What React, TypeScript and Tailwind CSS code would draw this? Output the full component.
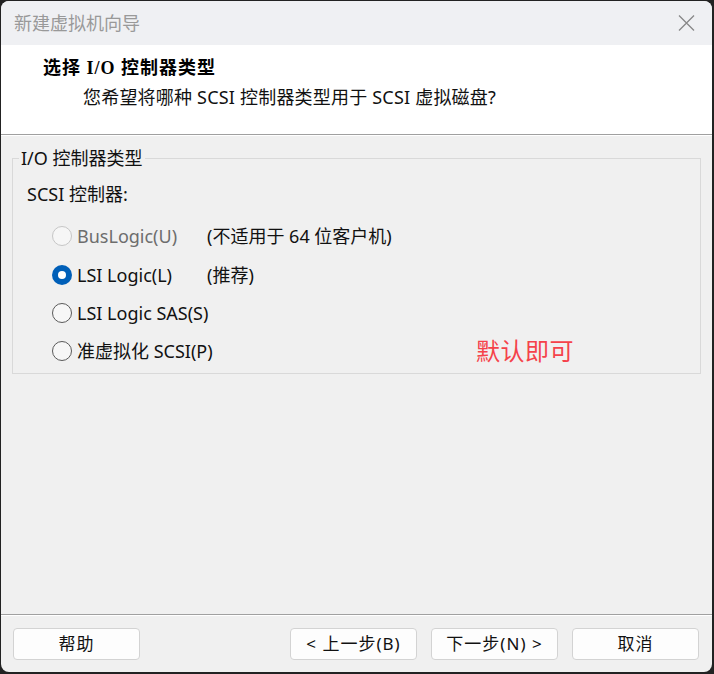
import { useState } from "react";

const ui = "font-['Noto_Sans','Noto_Sans_CJK_SC',sans-serif]";

type Opt = { label: string; note?: string; disabled?: boolean };

const options: Opt[] = [
  { label: "BusLogic(U)", note: "(不适用于 64 位客户机)", disabled: true },
  { label: "LSI Logic(L)", note: "(推荐)" },
  { label: "LSI Logic SAS(S)" },
  { label: "准虚拟化 SCSI(P)" },
];

const Radio = ({ checked, disabled }: { checked: boolean; disabled?: boolean }) => {
  if (checked) {
    return (
      <span className="flex h-[20px] w-[20px] shrink-0 items-center justify-center rounded-full bg-[#005fb8]">
        <span className="h-[8px] w-[8px] rounded-full bg-white" />
      </span>
    );
  }
  return (
    <span
      className={`h-[20px] w-[20px] shrink-0 rounded-full border ${
        disabled ? "border-[#c6c6c6] bg-[#f6f6f6]" : "border-[#5a5a5a] bg-[#f7f7f7]"
      }`}
    />
  );
};

const Button = ({ children }: { children: React.ReactNode }) => (
  <button className="flex h-[32px] w-[127px] items-center justify-center rounded-[4px] border border-[#d3d3d3] bg-[#fdfdfd] text-[17px] tracking-[1px] text-[#111]">
    {children}
  </button>
);

export default function App() {
  const [selected, setSelected] = useState(1);

  return (
    <div className={`h-[674px] w-[714px] bg-[#222] pb-[2px] pl-[1px] pr-[2px] pt-[1px] ${ui}`}>
      <div className="flex h-full flex-col overflow-hidden rounded-[8px] bg-[#f0f0f0]">
        {/* title bar */}
        <div className="flex h-[44px] items-center justify-between bg-[#eff0f3] pl-[13px] pr-[17px]">
          <span className="text-[18px] text-[#999]">新建虚拟机向导</span>
          <svg width="17" height="16" viewBox="0 0 17 16">
            <path d="M1 0.5 L16 15.5 M16 0.5 L1 15.5" stroke="#888" strokeWidth="1.3" />
          </svg>
        </div>

        {/* header */}
        <div className="h-[90px] border-b border-[#a0a0a0] bg-white pl-[42px] pt-[11px]">
          <div className="font-['Liberation_Serif','Noto_Sans_CJK_SC',serif] text-[18px] font-bold leading-[24px] tracking-[1px] text-black">
            选择 I/O 控制器类型
          </div>
          <div className="mt-[5px] pl-[40px] text-[18px] leading-[24px] tracking-[0.2px] text-[#111]">
            您希望将哪种 SCSI 控制器类型用于 SCSI 虚拟磁盘?
          </div>
        </div>
        <div className="h-[1px] bg-white" />

        {/* body */}
        <div className="flex-1 px-[11px] pt-[10px]">
          <fieldset className="border border-[#d9d9d9] pb-[2px] pl-[14px] pr-[12px]">
            <legend className="-ml-[8px] px-[2px] text-[18px] leading-[24px] text-[#111]">I/O 控制器类型</legend>
            <div className="mt-[12px] text-[18px] leading-[24px] text-[#111]">SCSI 控制器:</div>
            <div className="mt-[11px] flex flex-col">
              {options.map((o, i) => (
                <div key={o.label} className="grid h-[38.4px] grid-cols-[155px_1fr] items-center pl-[25px] leading-[24px]">
                  <label
                    className="flex items-center gap-[5px]"
                    onClick={() => !o.disabled && setSelected(i)}
                  >
                    <Radio checked={selected === i} disabled={o.disabled} />
                    <span className={`whitespace-nowrap text-[18px] ${o.disabled ? "text-[#6d6d6d]" : "text-[#111]"}`}>
                      {o.label}
                    </span>
                  </label>
                  {o.note && <span className="text-[18px] text-[#111]">{o.note}</span>}
                  {i === 3 && (
                    <span className="ml-[269px] text-[24px] leading-[30px] tracking-[0.5px] text-[#f5424a]">默认即可</span>
                  )}
                </div>
              ))}
            </div>
          </fieldset>
        </div>

        {/* footer */}
        <div className="border-t border-[#a0a0a0]">
          <div className="flex items-center border-t border-white pb-[12px] pl-[12px] pr-[13px] pt-[12px]">
            <Button>帮助</Button>
            <div className="ml-auto flex gap-[14px]">
              <Button>&lt; 上一步(B)</Button>
              <Button>下一步(N) &gt;</Button>
              <Button>取消</Button>
            </div>
          </div>
        </div>
      </div>
    </div>
  );
}
